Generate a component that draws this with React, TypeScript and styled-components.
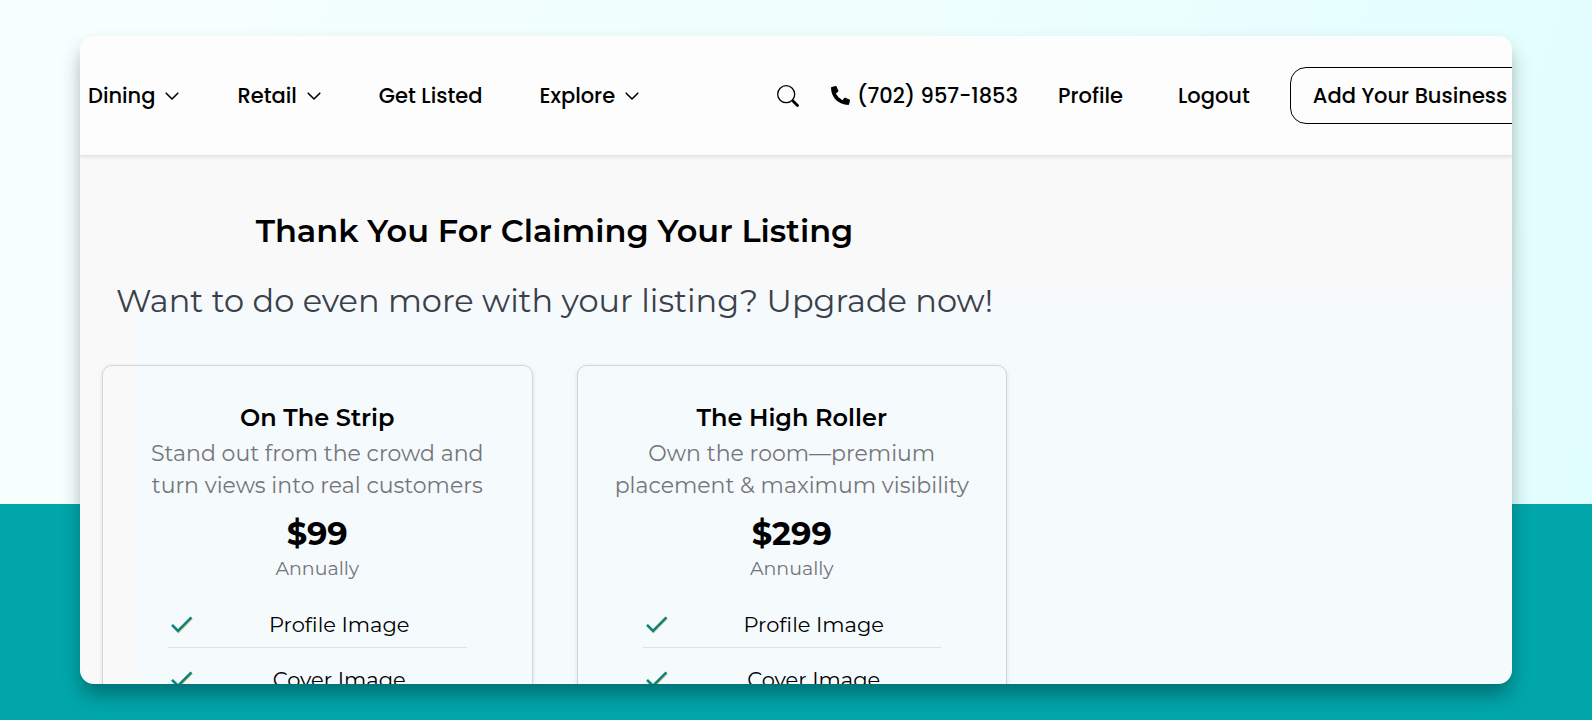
import React from "react";
import styled, { createGlobalStyle } from "styled-components";
import { FaPhoneAlt } from "react-icons/fa";

const GlobalStyle = createGlobalStyle`
  * { box-sizing: border-box; }
  body { margin: 0; color: #000; font-family: Montserrat, Inter, sans-serif; }
  h1, h2, p, ul { margin: 0; padding: 0; }
`;

const Page = styled.div`
  height: 100vh;
  padding: 36px 80px;
  background:
    linear-gradient(transparent 70%, #01a6ab 70%),
    linear-gradient(110deg, #f6fffe 0%, #eefffe 50%, #dffdfe 100%);
`;

const Window = styled.div`
  height: 100%;
  overflow: hidden;
  display: flex;
  flex-direction: column;
  border-radius: 14px;
  background:
    linear-gradient(90deg, #f9f9fa 0, #f9f9fa 56px, transparent 62px),
    linear-gradient(#f9f9f9 0, #f9f9f9 240px, #f5fafd 275px);
  box-shadow: 0 12px 20px -2px rgba(0, 0, 0, 0.34);
`;

const Header = styled.header`
  flex: none;
  display: flex;
  align-items: center;
  height: 120px;
  padding-left: 8px;
  background: #fdfdfd;
  border-bottom: 1px solid #e4e4e4;
  box-shadow: 0 1px 4px rgba(0, 0, 0, 0.1);
  font-family: Poppins, Inter, sans-serif;
  font-size: 21px;
  line-height: 32px;
  font-weight: 500;
  white-space: nowrap;
`;

const MainNav = styled.nav`
  flex: none;
  display: flex;
  gap: 57px;
`;

const Actions = styled.div`
  flex: none;
  display: flex;
  align-items: center;
  gap: 40px;
  margin-left: 137px;
`;

const Contact = styled.div`
  display: flex;
  align-items: center;
  gap: 32px;
`;

const Account = styled.nav`
  display: flex;
  gap: 55px;
`;

const NavLink = styled.a`
  display: flex;
  align-items: center;
  gap: 7px;
  color: #000;
  text-decoration: none;
`;

const MenuButton = styled.button`
  display: flex;
  align-items: center;
  gap: 9px;
  padding: 0;
  border: 0;
  background: none;
  color: #000;
  font: inherit;
`;

const IconButton = styled.button`
  display: flex;
  padding: 0;
  border: 0;
  background: none;
  color: #000;
`;

const OutlineButton = styled.button`
  height: 57px;
  padding: 0 22px;
  border: 1px solid #000;
  border-radius: 16px;
  background: none;
  color: #000;
  font: inherit;
`;

const Content = styled.main`
  flex: none;
  width: 100%;
  max-width: 949px;
  padding: 55px 22px 0;
  text-align: center;
`;

const Heading = styled.h1`
  font-size: 32px;
  line-height: 40px;
  font-weight: 600;
`;

const Lead = styled.p`
  && { margin: 26px 0 40px; }
  color: #3b3f4a;
  font-size: 32px;
  line-height: 48px;
`;

const Plans = styled.div`
  display: grid;
  grid-template-columns: 1fr 1fr;
  gap: 44px;
`;

const Card = styled.section`
  padding: 36px 32px;
  border: 1px solid #d3d6d9;
  border-radius: 10px;
  box-shadow: 0 1px 4px rgba(0, 0, 0, 0.12);
`;

const PlanName = styled.h2`
  font-size: 24px;
  line-height: 32px;
  font-weight: 600;
`;

const Pitch = styled.p`
  && { margin: 4px 0 12px; }
  color: #74757b;
  font-size: 22px;
  line-height: 32px;
`;

const Price = styled.p`
  font-size: 32px;
  line-height: 40px;
  font-weight: 700;
`;

const Period = styled.p`
  color: #74757b;
  font-size: 19px;
  line-height: 30px;
`;

const Features = styled.ul`
  && { margin: 9px 33px 0; }
  list-style: none;
  font-size: 21px;
  line-height: 32px;
`;

const Feature = styled.li`
  display: flex;
  align-items: center;
  gap: 16px;
  padding: 16px 0 6px 2px;
  border-bottom: 1px solid #dde3e5;
`;

const FeatureName = styled.span`
  flex: 1;
`;

const Chevron = () => (
  <svg width="16" height="16" viewBox="0 0 16 16" fill="none" stroke="currentColor" strokeWidth="1.6" strokeLinecap="round" strokeLinejoin="round" aria-hidden="true">
    <path d="M2.200 5.200 8 11l5.800-5.800" />
  </svg>
);

const SearchIcon = () => (
  <svg width="22" height="22" viewBox="0 0 22 22" fill="none" stroke="currentColor" aria-hidden="true">
    <circle cx="9.2" cy="9.2" r="8.5" strokeWidth="1.3" />
    <path d="m15.2 15.2 1.500 1.500" strokeWidth="1.8" />
    <path d="m16.200 16.200 4.300 4.300" strokeWidth="2.8" strokeLinecap="round" />
  </svg>
);

const CheckIcon = () => (
  <svg width="26" height="24" viewBox="0 0 26 24" fill="none" strokeWidth="2.6" aria-hidden="true">
    <path d="m2.600 12.600 6 6L22 5.200" stroke="#f3c77a" />
    <path d="m2 11.800 6 6L21.400 4.400" stroke="#07857f" />
  </svg>
);

const plans = [
  { name: "On The Strip", pitch: "Stand out from the crowd and turn views into real customers", price: "$99" },
  { name: "The High Roller", pitch: "Own the room—premium placement & maximum visibility", price: "$299" },
];

const features = ["Profile Image", "Cover Image"];

export default function App() {
  return (
    <Page>
      <GlobalStyle />
      <Window>
        <Header>
          <MainNav>
            <MenuButton>Dining<Chevron /></MenuButton>
            <MenuButton>Retail<Chevron /></MenuButton>
            <NavLink href="#get-listed">Get Listed</NavLink>
            <MenuButton>Explore<Chevron /></MenuButton>
          </MainNav>
          <Actions>
            <Contact>
              <IconButton aria-label="Search"><SearchIcon /></IconButton>
              <NavLink href="tel:+17029571853"><FaPhoneAlt size={19} aria-hidden="true" />(702) 957-1853</NavLink>
            </Contact>
            <Account>
              <NavLink href="#profile">Profile</NavLink>
              <NavLink href="#logout">Logout</NavLink>
            </Account>
            <OutlineButton>Add Your Business</OutlineButton>
          </Actions>
        </Header>
        <Content>
          <Heading>Thank You For Claiming Your Listing</Heading>
          <Lead>Want to do even more with your listing? Upgrade now!</Lead>
          <Plans>
            {plans.map((plan) => (
              <Card key={plan.name}>
                <PlanName>{plan.name}</PlanName>
                <Pitch>{plan.pitch}</Pitch>
                <Price>{plan.price}</Price>
                <Period>Annually</Period>
                <Features>
                  {features.map((feature) => (
                    <Feature key={feature}>
                      <CheckIcon />
                      <FeatureName>{feature}</FeatureName>
                    </Feature>
                  ))}
                </Features>
              </Card>
            ))}
          </Plans>
        </Content>
      </Window>
    </Page>
  );
}
